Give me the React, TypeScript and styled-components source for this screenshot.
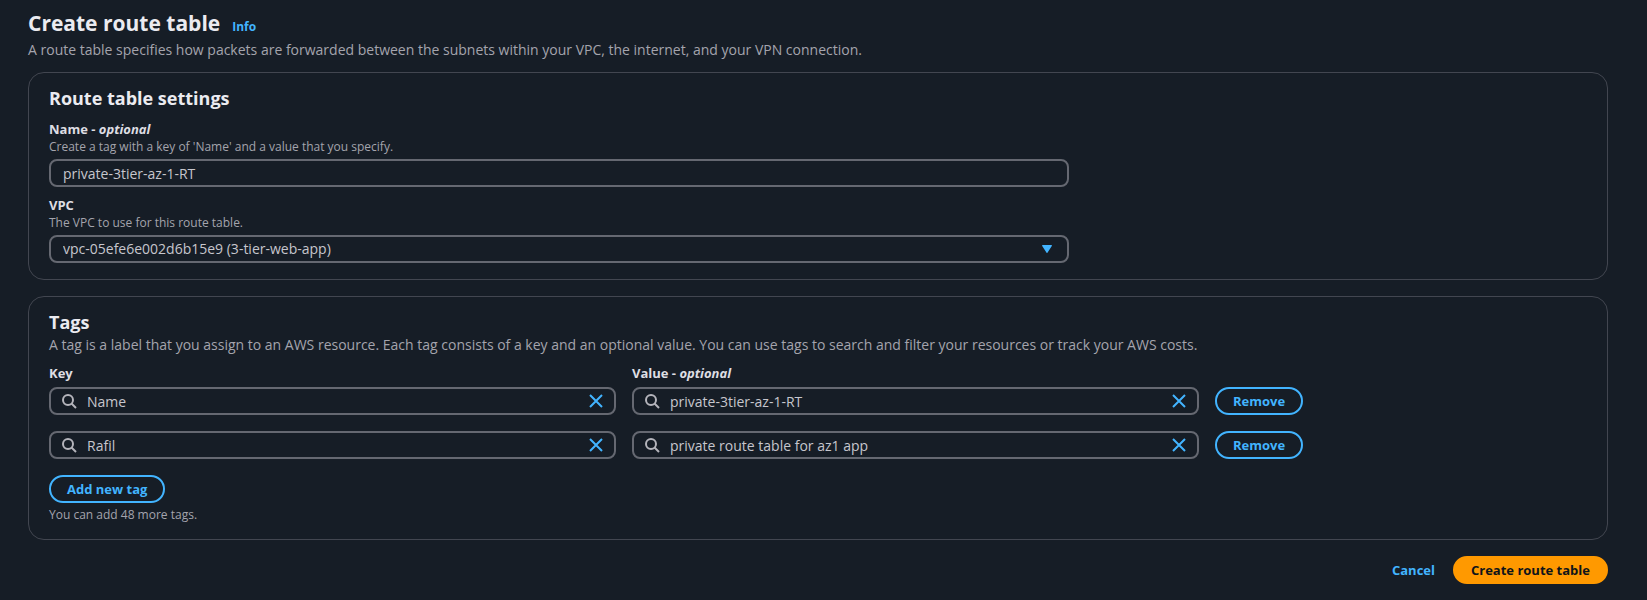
import React, { useState } from "react";
import styled, { createGlobalStyle } from "styled-components";

const color = {
  page: "#161d26",
  border: "#424650",
  inputBorder: "#656871",
  heading: "#ebebf0",
  label: "#dedee3",
  text: "#c6c6cd",
  muted: "#a4a4ad",
  icon: "#b4b4bb",
  link: "#42b4ff",
  primary: "#ff9900",
  primaryText: "#0f141a",
};

const GlobalStyle = createGlobalStyle`
  *, *::before, *::after { box-sizing: border-box; }
  body {
    margin: 0;
    background: ${color.page};
    color: ${color.text};
    font-family: "Open Sans", "Noto Sans", sans-serif;
    font-size: 14px;
    line-height: 20px;
  }
  h1, h2, p { margin: 0; }
  button, input, select { font: inherit; color: inherit; }
`;

const Page = styled.form`
  display: flex;
  flex-direction: column;
  gap: 16px;
  min-height: 100vh;
  padding: 8px 39px 16px 28px;
`;

const PageHeader = styled.header`
  display: flex;
  flex-direction: column;
  gap: 2px;
  margin-bottom: -4px;
`;

const TitleRow = styled.div`
  display: flex;
  align-items: baseline;
  gap: 12px;
`;

const Title = styled.h1`
  color: ${color.heading};
  font-size: 21px;
  font-weight: 700;
  line-height: 30px;
`;

const InfoLink = styled.a`
  color: ${color.link};
  font-size: 12px;
  font-weight: 700;
  line-height: 16px;
  text-decoration: none;
`;

const Description = styled.p`
  color: ${color.muted};
`;

const Panel = styled.section`
  display: flex;
  flex-direction: column;
  gap: 8px;
  padding: 12px 20px 16px;
  border: 1px solid ${color.border};
  border-radius: 16px;
`;

const PanelTitle = styled.h2`
  color: ${color.heading};
  font-size: 18px;
  font-weight: 700;
  line-height: 26px;
`;

const FieldGrid = styled.div`
  display: grid;
  grid-template-columns: 2fr 1fr;
  gap: 8px;
`;

const Field = styled.div`
  grid-column: 1;
  display: flex;
  flex-direction: column;
`;

const Label = styled.label`
  color: ${color.label};
  font-size: 13px;
  font-weight: 700;
`;

const Hint = styled.p`
  color: ${color.muted};
  font-size: 12px;
  line-height: 16px;
`;

const Control = styled.div`
  display: flex;
  align-items: center;
  height: 28px;
  border: 2px solid ${color.inputBorder};
  border-radius: 8px;
`;

const FieldControl = styled(Control)`
  margin-top: 4px;
`;

const TextInput = styled.input`
  flex: 1;
  min-width: 0;
  height: 100%;
  padding: 0 12px;
  border: 0;
  background: transparent;
  outline: none;
`;

const SelectControl = styled(FieldControl)`
  display: grid;
  align-items: stretch;

  > * { grid-area: 1 / 1; }
  > svg {
    align-self: center;
    justify-self: end;
    margin-right: 15px;
    pointer-events: none;
  }
`;

const Select = styled.select`
  appearance: none;
  min-width: 0;
  padding: 0 32px 0 12px;
  border: 0;
  background: transparent;
  outline: none;

  option { background: ${color.page}; }
`;

const SearchControl = styled(Control)`
  gap: 10px;
  padding: 0 10px;

  ${TextInput} { padding: 0; }
`;

const ClearButton = styled.button`
  display: flex;
  padding: 0;
  border: 0;
  background: transparent;
  color: ${color.link};
  cursor: pointer;
`;

const TagGrid = styled.div`
  display: grid;
  grid-template-columns: 189fr 189fr 124fr;
  gap: 16px;
`;

const ColumnLabel = styled.div`
  margin-bottom: -12px;
  color: ${color.label};
  font-size: 13px;
  font-weight: 700;
`;

const Button = styled.button<{ $kind?: "outline" | "primary" | "link" }>`
  height: 28px;
  padding: 0 16px;
  border: 2px solid
    ${(p) =>
      p.$kind === "primary" ? color.primary : p.$kind === "link" ? "transparent" : color.link};
  border-radius: 14px;
  background: ${(p) => (p.$kind === "primary" ? color.primary : "transparent")};
  color: ${(p) => (p.$kind === "primary" ? color.primaryText : color.link)};
  font-size: 13px;
  font-weight: 700;
  line-height: 20px;
  white-space: nowrap;
  justify-self: start;
  cursor: pointer;
`;

const AddTag = styled.div`
  display: flex;
  flex-direction: column;
  align-items: flex-start;
  gap: 4px;
  margin-top: 8px;
`;

const Actions = styled.footer`
  display: flex;
  justify-content: flex-end;
`;

const SearchIcon = () => (
  <svg width="16" height="16" viewBox="0 0 16 16" fill="none" stroke={color.icon} strokeWidth="2" aria-hidden="true">
    <circle cx="7" cy="7" r="5" />
    <path d="m15 15-4.500-4.500" />
  </svg>
);

const CloseIcon = () => (
  <svg width="16" height="16" viewBox="0 0 16 16" fill="none" stroke="currentColor" strokeWidth="2" aria-hidden="true">
    <path d="m2 2 12 12M14 2 2 14" />
  </svg>
);

const CaretIcon = () => (
  <svg width="10" height="8" viewBox="0 0 10 8" aria-hidden="true">
    <path d="M.7 0h8.600c.6 0 .9.600.5 1.100L5.600 7.600a.7.700 0 0 1-1.200 0L.2 1.100C-.1.600.1 0 .7 0z" fill={color.link} />
  </svg>
);

type SearchFieldProps = {
  label: string;
  value: string;
  onChange: (value: string) => void;
};

const SearchField = ({ label, value, onChange }: SearchFieldProps) => (
  <SearchControl>
    <SearchIcon />
    <TextInput aria-label={label} value={value} onChange={(e) => onChange(e.target.value)} />
    <ClearButton type="button" aria-label={`Clear ${label}`} onClick={() => onChange("")}>
      <CloseIcon />
    </ClearButton>
  </SearchControl>
);

type Tag = { key: string; value: string };

const MAX_TAGS = 50;

export default function App() {
  const [name, setName] = useState("private-3tier-az-1-RT");
  const [tags, setTags] = useState<Tag[]>([
    { key: "Name", value: "private-3tier-az-1-RT" },
    { key: "Rafil", value: "private route table for az1 app" },
  ]);

  const update = (index: number, patch: Partial<Tag>) =>
    setTags(tags.map((tag, i) => (i === index ? { ...tag, ...patch } : tag)));

  return (
    <>
      <GlobalStyle />
      <Page onSubmit={(e) => e.preventDefault()}>
        <PageHeader>
          <TitleRow>
            <Title>Create route table</Title>
            <InfoLink href="#info">Info</InfoLink>
          </TitleRow>
          <Description>
            A route table specifies how packets are forwarded between the subnets within your VPC, the
            internet, and your VPN connection.
          </Description>
        </PageHeader>

        <Panel>
          <PanelTitle>Route table settings</PanelTitle>
          <FieldGrid>
            <Field>
              <Label htmlFor="name">
                Name - <em>optional</em>
              </Label>
              <Hint id="name-hint">Create a tag with a key of 'Name' and a value that you specify.</Hint>
              <FieldControl>
                <TextInput
                  id="name"
                  aria-describedby="name-hint"
                  value={name}
                  onChange={(e) => setName(e.target.value)}
                />
              </FieldControl>
            </Field>
            <Field>
              <Label htmlFor="vpc">VPC</Label>
              <Hint id="vpc-hint">The VPC to use for this route table.</Hint>
              <SelectControl>
                <Select id="vpc" aria-describedby="vpc-hint">
                  <option>vpc-05efe6e002d6b15e9 (3-tier-web-app)</option>
                </Select>
                <CaretIcon />
              </SelectControl>
            </Field>
          </FieldGrid>
        </Panel>

        <Panel>
          <header>
            <PanelTitle>Tags</PanelTitle>
            <Description>
              A tag is a label that you assign to an AWS resource. Each tag consists of a key and an
              optional value. You can use tags to search and filter your resources or track your AWS
              costs.
            </Description>
          </header>
          <TagGrid>
            <ColumnLabel>Key</ColumnLabel>
            <ColumnLabel>
              Value - <em>optional</em>
            </ColumnLabel>
            <span />
            {tags.map((tag, i) => (
              <React.Fragment key={i}>
                <SearchField label={`Key ${i + 1}`} value={tag.key} onChange={(key) => update(i, { key })} />
                <SearchField label={`Value ${i + 1}`} value={tag.value} onChange={(value) => update(i, { value })} />
                <Button type="button" onClick={() => setTags(tags.filter((_, n) => n !== i))}>
                  Remove
                </Button>
              </React.Fragment>
            ))}
          </TagGrid>
          <AddTag>
            <Button type="button" onClick={() => setTags([...tags, { key: "", value: "" }])}>
              Add new tag
            </Button>
            <Hint>You can add {MAX_TAGS - tags.length} more tags.</Hint>
          </AddTag>
        </Panel>

        <Actions>
          <Button type="button" $kind="link">
            Cancel
          </Button>
          <Button type="submit" $kind="primary">
            Create route table
          </Button>
        </Actions>
      </Page>
    </>
  );
}
